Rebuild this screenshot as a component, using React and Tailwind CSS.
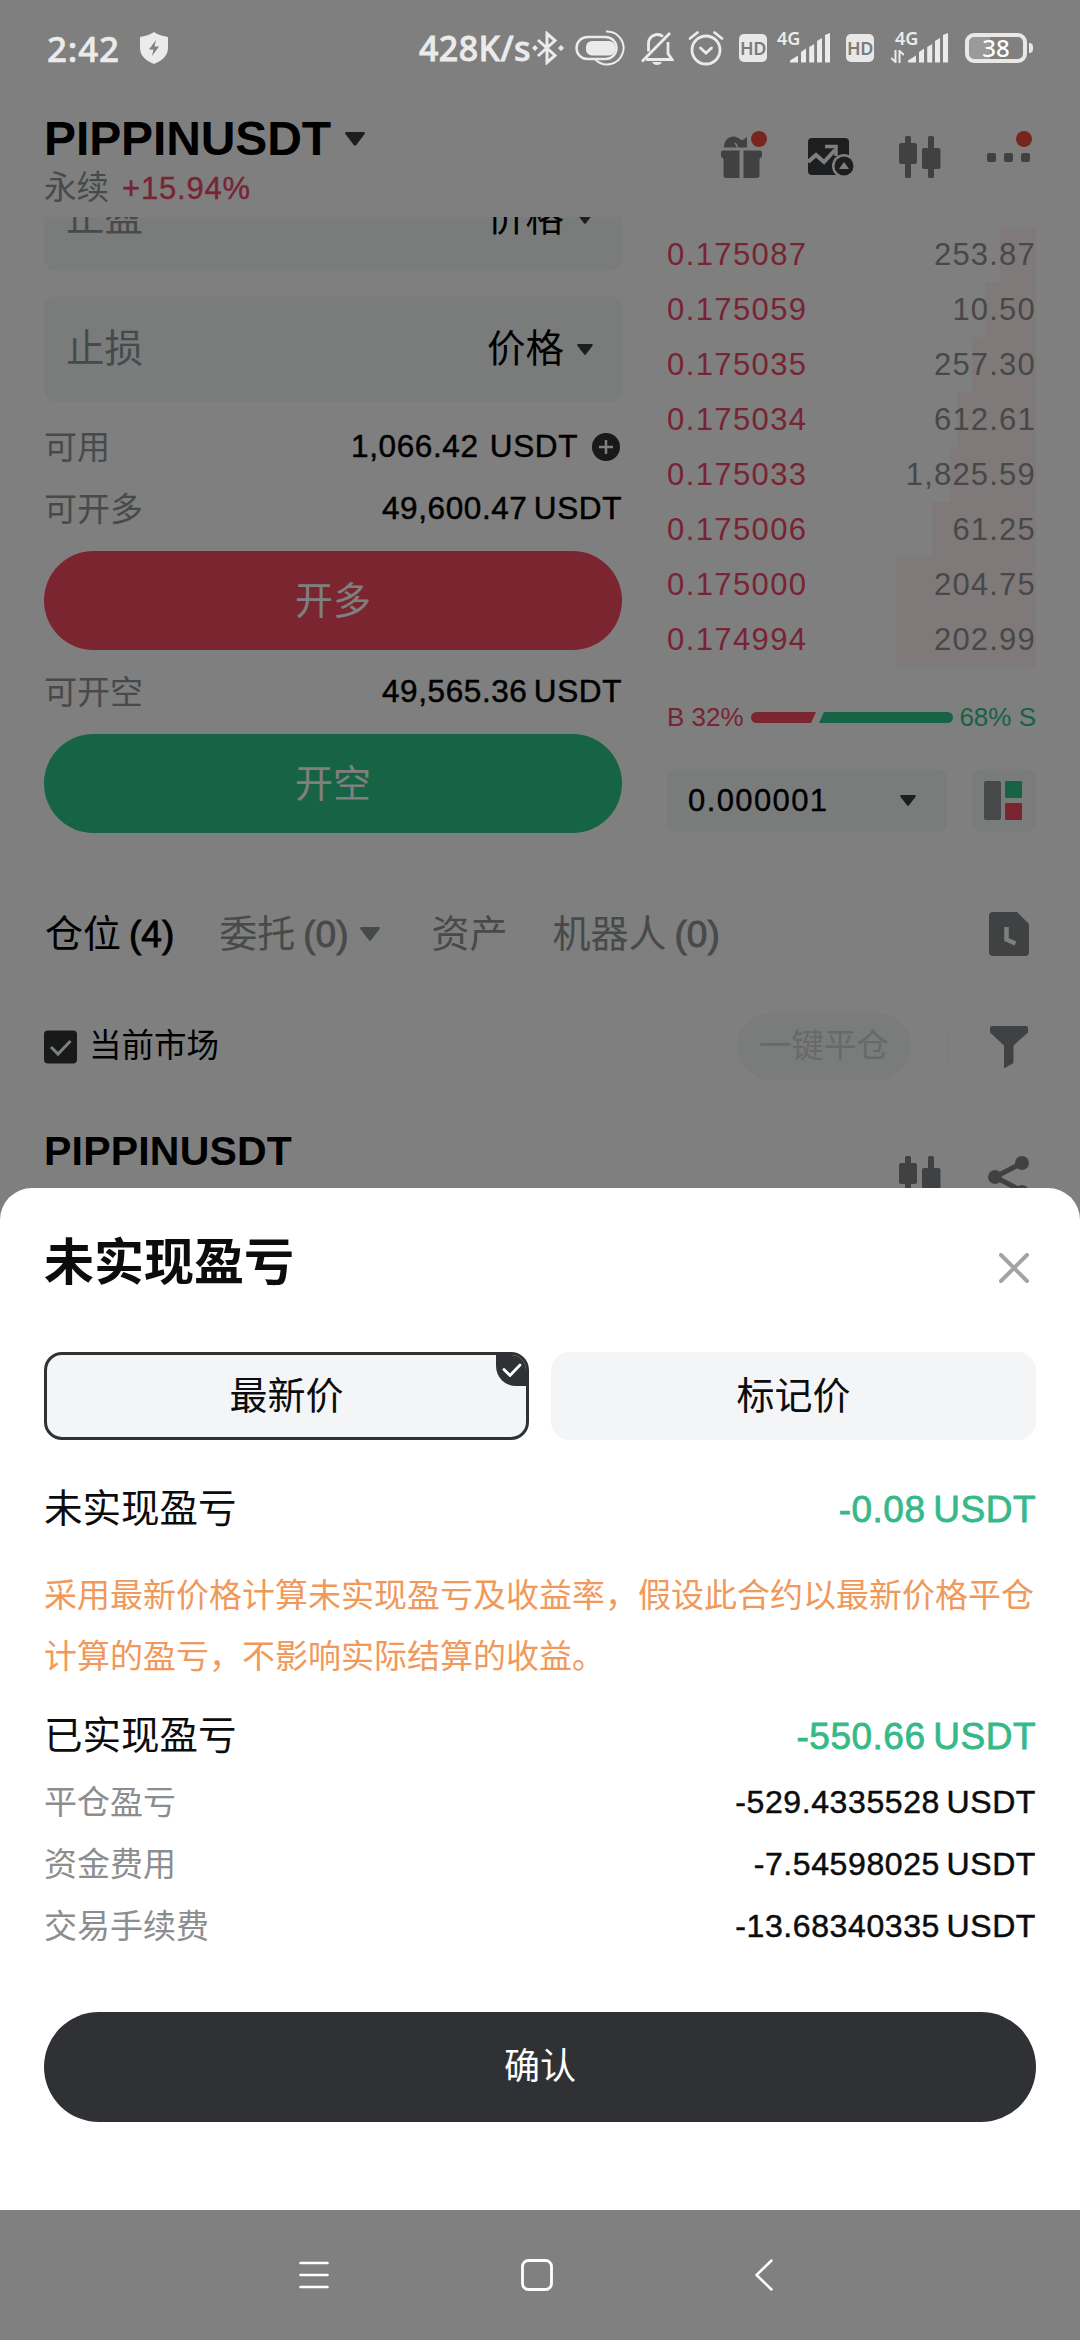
import clsx from "clsx";

const asks = [
  { price: "0.175087", amount: "253.87", depth: 36 },
  { price: "0.175059", amount: "10.50", depth: 51 },
  { price: "0.175035", amount: "257.30", depth: 64 },
  { price: "0.175034", amount: "612.61", depth: 79 },
  { price: "0.175033", amount: "1,825.59", depth: 86 },
  { price: "0.175006", amount: "61.25", depth: 104 },
  { price: "0.175000", amount: "204.75", depth: 140 },
  { price: "0.174994", amount: "202.99", depth: 140 },
];

const details = [
  { label: "平仓盈亏", value: "-529.4335528 USDT" },
  { label: "资金费用", value: "-7.54598025 USDT" },
  { label: "交易手续费", value: "-13.68340335 USDT" },
];

const Caret = ({ className }) => (
  <svg viewBox="0 0 20 14" className={className} fill="currentColor">
    <path d="M1.5 0h17c1.2 0 1.8 1.2 1.1 2.1l-8.3 11c-.7.9-1.900.9-2.600 0L.4 2.1C-.3 1.200.3 0 1.500 0z" />
  </svg>
);

const Candles = ({ className }) => (
  <svg viewBox="0 0 42 42" className={className} fill="currentColor">
    <rect x="6" y="0" width="6" height="42" rx="1.5" />
    <rect x="0" y="7" width="18" height="21" rx="2" />
    <rect x="29" y="0" width="6" height="42" rx="1.5" />
    <rect x="23" y="12" width="18.5" height="21" rx="2" />
  </svg>
);

const Signal = () => (
  <svg viewBox="0 0 40 30" className="h-[30px] w-10" fill="currentColor">
    <path d="M0 29.5v-2l8-5v7z" />
    <path d="M11 19l5-3.5v14h-5z" />
    <path d="M19.2 14l5-3v18.5h-5z" />
    <path d="M27 8l5-3v24.5h-5z" />
    <path d="M35 2l5-2v29.5h-5z" />
  </svg>
);

const HdBadge = ({ className }) => (
  <div
    className={clsx(
      "flex h-7 w-7 items-center justify-center rounded-[5px] bg-[#e8e8e8] font-['Noto_Sans'] text-[18px] leading-none font-semibold tracking-[-0.5px] text-[#7b7b7b]",
      className
    )}
  >
    HD
  </div>
);

const StatusBar = () => (
  <div className="absolute inset-x-0 top-0 flex h-24 items-center pl-[47px] font-['Noto_Sans'] font-medium text-[#ebebeb]">
    <span className="w-[93px] text-[35px] leading-none tracking-[0.8px] [-webkit-text-stroke:0.6px_currentColor]">2:42</span>
    <svg viewBox="0 0 28 32" className="h-8 w-7">
      <path d="M14 0c3.5 2.4 8 4 13 4.700.6 0 1 .5 1 1V16c0 7-5 12.500-14 16C5 28.500 0 23 0 16V5.700c0-.5.4-1 1-1C6 4 10.500 2.400 14 0z" fill="currentColor" />
      <path d="M16 8l-7 9.500h4.500L12 24l7-9.500h-4.500z" fill="#808080" />
    </svg>
    <span className="ml-[251px] w-[113px] text-[34px] leading-none tracking-[0.4px] whitespace-nowrap [-webkit-text-stroke:0.8px_currentColor]">428K/s</span>
    <svg viewBox="0 0 32 34" className="h-[34px] w-8" fill="none" stroke="currentColor" strokeWidth="3">
      <path d="M6 9l17 15.500-8 7V2.500l8 7L6 25" />
      <path d="M29 14l3 3-3 3-3-3zM3 14l3 3-3 3-3-3z" fill="currentColor" stroke="none" />
    </svg>
    <svg viewBox="0 0 50 36" className="ml-[11px] h-9 w-[50px]" fill="none" stroke="currentColor">
      <rect x="1.5" y="7" width="40" height="22" rx="11" strokeWidth="2.5" />
      <rect x="11" y="11" width="29" height="14.5" rx="6" fill="currentColor" stroke="none" />
      <path d="M31 1.500a16.500 16.500 0 1 1-10.500 28.300" strokeWidth="2" />
    </svg>
    <svg viewBox="0 0 34 34" className="ml-[15px] h-[34px] w-[34px]" fill="none" stroke="currentColor" strokeWidth="2.8">
      <path d="M23 5.500A9 9 0 0 0 8.500 12v8.500M6 28.500h26l-4-6V11" />
      <path d="M2 30.500L30 2" />
      <path d="M12 31h10c-1 2-3 3-5 3s-4-1-5-3z" fill="currentColor" stroke="none" />
    </svg>
    <svg viewBox="0 0 36 36" className="ml-[14px] h-9 w-9" fill="none" stroke="currentColor" strokeWidth="2.8" strokeLinecap="round">
      <circle cx="18" cy="20" r="14" />
      <path d="M12.500 18l5.500 5 5.500-5M2 8.500l7.500-6M34 8.500l-7.500-6" />
    </svg>
    <HdBadge className="ml-[15px]" />
    <div className="relative ml-[23px]">
      <Signal />
      <span className="absolute -top-1 -left-[13px] text-[18px] leading-none font-semibold">4G</span>
    </div>
    <HdBadge className="ml-4" />
    <div className="relative ml-[34px]">
      <Signal />
      <span className="absolute -top-1 -left-[13px] text-[18px] leading-none font-semibold">4G</span>
      <svg viewBox="0 0 13 13" className="absolute top-[17px] -left-[17px] h-[13px] w-[13px]" fill="none" stroke="currentColor" strokeWidth="2">
        <path d="M4.500 0v12L0 8M8.500 13V1L13 5" />
      </svg>
    </div>
    <div className="ml-[17px] flex h-[30px] w-[62px] items-center justify-center rounded-[9px] border-[4px] border-[#e8e8e8] bg-[linear-gradient(90deg,#9a9a9a_38%,#808080_38%)] text-[24px] leading-none text-white">
      38
    </div>
    <div className="ml-0.5 h-2.5 w-1 rounded-r bg-[#e8e8e8]" />
  </div>
);

const PriceInput = ({ label }) => (
  <div className="flex h-[106px] shrink-0 items-center rounded-xl bg-[#f4f8f8] pr-[29px] pl-[22px] text-[38.5px]">
    <span className="flex-1 text-[#8f9496]">{label}</span>
    <span>价格</span>
    <Caret className="ml-[13px] h-[11px] w-4 text-[#3a3c3e]" />
  </div>
);

const BalanceRow = ({ label, value, plus }) => (
  <div className="flex h-[62px] items-center text-[33px]">
    <span className="flex-1 text-[#8f9496]">{label}</span>
    <span
      className={clsx(
        "text-[31.5px] tracking-[0.6px] [-webkit-text-stroke:0.5px_currentColor]",
        plus ? "[word-spacing:2px]" : "[word-spacing:-3px]"
      )}
    >
      {value}
    </span>
    {plus && (
      <svg viewBox="0 0 28 28" className="mr-0.5 ml-[14px] h-7 w-7">
        <circle cx="14" cy="14" r="14" fill="#2f3235" />
        <path d="M14 7v14M7 14h14" stroke="#fff" strokeWidth="2.5" />
      </svg>
    )}
  </div>
);

const OrderBook = () => (
  <div className="w-[369px]">
    <div className="pt-[10px]">
      {asks.map((row) => (
        <div key={row.price} className="relative flex h-[55px] items-center justify-between text-[31px]">
          <div className="absolute inset-y-0 right-0 bg-[#fff4f2]" style={{ width: row.depth }} />
          <span className="relative tracking-[1.4px] text-[#f0486a]">{row.price}</span>
          <span className="relative tracking-[1.2px] text-[#8c9092]">{row.amount}</span>
        </div>
      ))}
    </div>
    <div className="mt-[34px] flex h-8 items-center justify-between text-[26px]">
      <span className="text-[#f0486a]">B 32%</span>
      <svg viewBox="0 0 202 11" className="h-[11px] w-[202px]">
        <path d="M5.500 0H65l-5 11H5.500a5.500 5.500 0 0 1 0-11z" fill="#f64a60" />
        <path d="M73 0h123.500a5.500 5.500 0 0 1 0 11H68z" fill="#2cc68a" />
      </svg>
      <span className="text-[#2cc68a]">68% S</span>
    </div>
    <div className="mt-[36px] flex justify-between">
      <div className="flex h-[63px] w-[280px] items-center justify-between rounded-lg bg-[#f4f8f8] pr-[31px] pl-[21px] text-[31px]">
        <span className="tracking-[1.4px] [-webkit-text-stroke:0.4px_currentColor]">0.000001</span>
        <Caret className="h-[11px] w-4 text-[#3a3c3e]" />
      </div>
      <div className="flex h-[63px] w-16 items-center justify-center gap-1 rounded-lg bg-[#f4f8f8] pr-0.5">
        <div className="h-[39px] w-[17px] rounded-[2px] bg-[#8c9093]" />
        <div className="flex flex-col gap-[5px]">
          <div className="h-[17px] w-[17px] rounded-[1px] bg-[#2cc68a]" />
          <div className="h-[17px] w-[17px] rounded-[1px] bg-[#f64a60]" />
        </div>
      </div>
    </div>
  </div>
);

const TradePage = () => (
  <div className="flex h-[1240px] flex-col overflow-hidden bg-white pt-24 pr-11 pl-11 leading-none">
    <header className="flex h-[121px] shrink-0 justify-between">
      <div className="pt-[19px]">
        <div className="flex h-12 items-center gap-[14px]">
          <h1 className="text-[48px] font-bold tracking-[-0.1px]">PIPPINUSDT</h1>
          <Caret className="h-[14px] w-5 text-[#3a3c3e]" />
        </div>
        <div className="mt-[9px] flex items-center gap-[13px] text-[32.5px]">
          <span className="text-[#8f9496]">永续</span>
          <span className="text-[31px] tracking-[0.8px] text-[#f0486a] [-webkit-text-stroke:0.4px_currentColor]">+15.94%</span>
        </div>
      </div>
      <div className="flex h-[42px] pt-10 text-[#7f8385]">
        <div className="relative h-[42px]">
          <svg viewBox="0 0 42 42" className="h-[42px] w-[42px]" fill="currentColor">
            <path d="M3 11.500C3 4 8 0 13 0.500c4 .3 6 3.500 8 3.500 2.500 0 4-3 5-3v10.500h-9c0-3-2-5-4-5l3 5z" />
            <path d="M2 14.500h16.500V42H5c-1.500 0-2.500-1-2.500-2.500V23L0 20.500v-4c0-1.200.8-2 2-2z" />
            <path d="M22.500 14.500H39c1.200 0 2 .8 2 2v4L38.500 23v16.500c0 1.500-1 2.500-2.500 2.500H22.500z" />
          </svg>
          <div className="absolute -top-[5px] right-[-4px] h-4 w-4 rounded-full bg-[#f04a40]" />
        </div>
        <svg viewBox="0 0 46 38" className="mt-0.5 ml-[45px] h-[38px] w-[46px]" fill="none">
          <rect width="41" height="37" rx="4" fill="#3a3d40" />
          <path d="M0 24l8-7 8 7 11-12" stroke="#fff" strokeWidth="4" />
          <path d="M17 8.500h11V18" stroke="#fff" strokeWidth="3.5" />
          <circle cx="36" cy="28" r="12" fill="#fff" />
          <circle cx="36" cy="28" r="9.5" fill="#3a3d40" />
          <path d="M36 24l5 7H31z" fill="#fff" />
        </svg>
        <Candles className="ml-[45px] h-[42px] w-[42px]" />
        <div className="relative ml-[46px] flex h-[42px] items-center gap-2 pr-[6px]">
          <div className="h-[9px] w-[9px] rounded-[2px] bg-current" />
          <div className="h-[9px] w-[9px] rounded-[2px] bg-current" />
          <div className="h-[9px] w-[9px] rounded-[2px] bg-current" />
          <div className="absolute -top-[5px] right-1 h-4 w-4 rounded-full bg-[#f04a40]" />
        </div>
      </div>
    </header>

    <div className="flex h-[617px] shrink-0 justify-between">
      <div className="flex w-[578px] flex-col">
        {/* take profit field is half scrolled under the header */}
        <div className="flex h-[54px] flex-col justify-end overflow-hidden">
          <PriceInput label="止盈" />
        </div>
        <div className="mt-[25px] mb-[14px]">
          <PriceInput label="止损" />
        </div>
        <BalanceRow label="可用" value="1,066.42 USDT" plus />
        <BalanceRow label="可开多" value="49,600.47 USDT" />
        <button className="mt-[11px] h-[99px] rounded-full bg-[#f64a60] text-[38px] text-white">开多</button>
        <div className="mt-[11px]">
          <BalanceRow label="可开空" value="49,565.36 USDT" />
        </div>
        <button className="mt-[11px] h-[99px] rounded-full bg-[#2cc68a] text-[38px] text-white">开空</button>
      </div>
      <OrderBook />
    </div>

    <nav className="mt-[69px] flex h-[62px] shrink-0 items-center pl-px text-[38px] text-[#8f9496]">
      <span className="text-black">仓位</span>
      <span className="ml-2 text-[37px] text-black [-webkit-text-stroke:0.9px_currentColor]">(4)</span>
      <span className="ml-[45px]">委托</span>
      <span className="ml-2 text-[37px] [-webkit-text-stroke:0.9px_currentColor]">(0)</span>
      <Caret className="ml-[11px] h-[14px] w-5" />
      <span className="ml-[52px]">资产</span>
      <span className="ml-[45px]">机器人</span>
      <span className="ml-2 text-[37px] [-webkit-text-stroke:0.9px_currentColor]">(0)</span>
      <svg viewBox="0 0 40 44" className="mr-[7px] ml-auto h-11 w-10">
        <path d="M4 0h24l12 12v28a4 4 0 0 1-4 4H4a4 4 0 0 1-4-4V4a4 4 0 0 1 4-4z" fill="#7f8385" />
        <path d="M17.500 15v12.500l9 4" fill="none" stroke="#fff" strokeWidth="4.5" />
      </svg>
    </nav>

    <div className="mt-[48px] flex h-[67px] shrink-0 items-center text-[32.5px]">
      <svg viewBox="0 0 34 34" className="h-[34px] w-[34px]" fill="none">
        <rect width="33" height="33" y=".5" rx="4" fill="#303336" />
        <path d="M7 17l7 7 12.500-13" stroke="#fff" strokeWidth="3" />
      </svg>
      <span className="ml-[11px]">当前市场</span>
      <span className="ml-auto flex h-[67px] w-[174px] items-center justify-center rounded-full bg-[#f4f8f8] text-[#d0d4d5]">一键平仓</span>
      <div className="ml-9 h-8 w-0.5 bg-[#f6f7f7]" />
      <svg viewBox="0 0 38 42" className="mr-2 ml-[41px] h-[42px] w-[38px]" fill="#7f8385">
        <path d="M2 0h34c1 0 2 .8 2 2v4.500L23.500 19.500V37L14 42.500v-23L0 6.500V2c0-1.200 1-2 2-2z" />
      </svg>
    </div>

    <div className="mt-[48px] flex shrink-0 justify-between">
      <h2 className="mt-[3px] text-[41px] font-bold tracking-[0.2px]">PIPPINUSDT</h2>
      <div className="mt-7 flex gap-[47px] pr-[6px] text-[#7f8385]">
        <Candles className="h-[42px] w-[42px]" />
        <svg viewBox="0 0 42 42" className="h-[42px] w-[42px]" fill="currentColor">
          <path d="M34 7L7 21l27 14" fill="none" stroke="currentColor" strokeWidth="5" />
          <circle cx="34" cy="7" r="7" />
          <circle cx="7" cy="21" r="7" />
          <circle cx="34" cy="36" r="7" />
        </svg>
      </div>
    </div>
  </div>
);

const PnlSheet = () => (
  <div className="absolute inset-x-0 top-[1188px] flex h-[1022px] flex-col rounded-t-[32px] bg-white px-11 leading-none text-[#0b0c0d]">
    <div className="mt-[50px] flex h-[50px] items-center justify-between">
      <h2 className="text-[50px] font-bold">未实现盈亏</h2>
      <svg viewBox="0 0 30 30" className="mt-2.5 mr-[7px] h-[30px] w-[30px]" stroke="#a3a4a6" strokeWidth="4" strokeLinecap="round">
        <path d="M2 2l26 26M28 2L2 28" />
      </svg>
    </div>

    <div className="mt-16 grid grid-cols-2 gap-[22px] text-[38px]">
      <button className="relative h-[88px] overflow-hidden rounded-[18px] border-[3px] border-[#303134] bg-[#f4f5f7]">
        最新价
        <span className="absolute -top-px -right-px flex h-8 w-[31px] items-center justify-center rounded-bl-[20px] bg-[#303134]">
          <svg viewBox="0 0 20 14" className="h-[14px] w-5" fill="none" stroke="#fff" strokeWidth="2.8" strokeLinecap="round">
            <path d="M2 6.500l6 6L18 2" />
          </svg>
        </span>
      </button>
      <button className="h-[88px] rounded-[18px] bg-[#f4f5f7]">标记价</button>
    </div>

    <div className="mt-[44px] flex h-[50px] items-center justify-between text-[38.5px]">
      <span>未实现盈亏</span>
      <span className="text-[37px] tracking-[0.5px] text-[#36b988] [-webkit-text-stroke:0.8px_currentColor] [word-spacing:-3px]">-0.08 USDT</span>
    </div>
    <p className="mt-[31px] text-[33px] leading-[61px] whitespace-nowrap text-[#f0995a]">
      采用最新价格计算未实现盈亏及收益率，假设此合约以最新价格平仓
      <br />
      计算的盈亏，不影响实际结算的收益。
    </p>
    <div className="mt-6 flex h-[50px] items-center justify-between text-[38.5px]">
      <span>已实现盈亏</span>
      <span className="text-[37px] tracking-[0.5px] text-[#36b988] [-webkit-text-stroke:0.8px_currentColor] [word-spacing:-3px]">-550.66 USDT</span>
    </div>
    <div className="mt-2.5">
      {details.map((item) => (
        <div key={item.label} className="flex h-[62px] items-center justify-between text-[33px]">
          <span className="text-[#8b8d8f]">{item.label}</span>
          <span className="text-[32px] tracking-[0.6px] [-webkit-text-stroke:0.5px_currentColor] [word-spacing:-3px]">{item.value}</span>
        </div>
      ))}
    </div>
    <button className="mt-[55px] h-[110px] shrink-0 rounded-full bg-[#303134] text-[36px] text-white">确认</button>
  </div>
);

const NavBar = () => (
  <div className="absolute inset-x-0 bottom-0 flex h-[130px] items-center bg-[#808080] pl-[299px]">
    <svg viewBox="0 0 30 32" className="h-8 w-[30px]" stroke="#fff" strokeWidth="2.5" strokeLinecap="round">
      <path d="M1.500 4h27M1.500 16h27M1.500 28h27" />
    </svg>
    <svg viewBox="0 0 32 32" className="ml-48 h-8 w-8" fill="none" stroke="#fff" strokeWidth="2.8">
      <rect x="1.5" y="1.5" width="29" height="29" rx="6" />
    </svg>
    <svg viewBox="0 0 18 32" className="ml-[202px] h-8 w-[18px]" fill="none" stroke="#fff" strokeWidth="2.5" strokeLinecap="round">
      <path d="M16.500 1.500L1.500 16l15 14.500" />
    </svg>
  </div>
);

const App = () => {
  return (
    <div
      lang="zh-CN"
      className="relative h-[2340px] w-[1080px] overflow-hidden bg-white font-['Liberation_Sans','Noto_Sans_CJK_SC',sans-serif] text-black"
    >
      <TradePage />
      <div className="absolute inset-0 bg-black/50" />
      <StatusBar />
      <PnlSheet />
      <NavBar />
    </div>
  );
};

export default App;
